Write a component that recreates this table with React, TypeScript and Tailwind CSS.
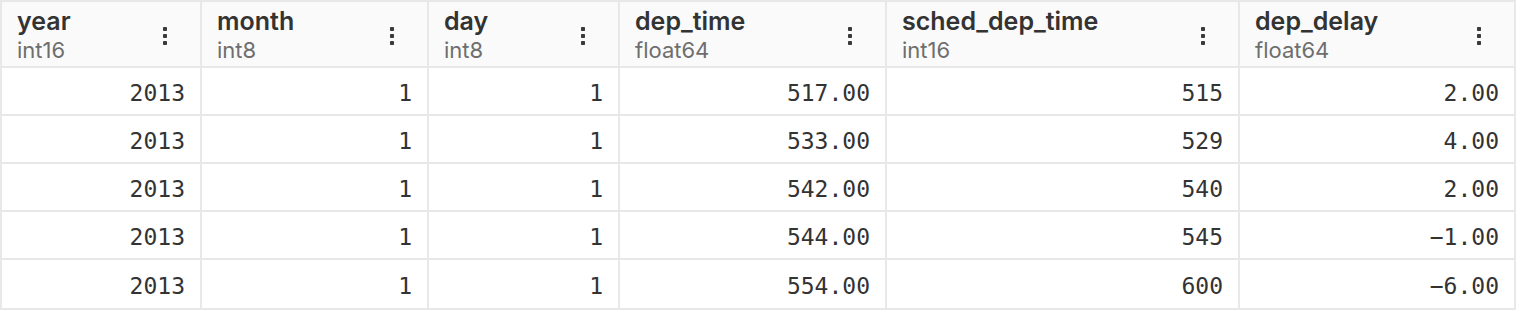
import React from 'react';

const columns = [
  { name: 'year', type: 'int16' },
  { name: 'month', type: 'int8' },
  { name: 'day', type: 'int8' },
  { name: 'dep_time', type: 'float64' },
  { name: 'sched_dep_time', type: 'int16' },
  { name: 'dep_delay', type: 'float64' },
];

const rows = [
  ['2013', '1', '1', '517.00', '515', '2.00'],
  ['2013', '1', '1', '533.00', '529', '4.00'],
  ['2013', '1', '1', '542.00', '540', '2.00'],
  ['2013', '1', '1', '544.00', '545', '\u22121.00'],
  ['2013', '1', '1', '554.00', '600', '\u22126.00'],
];

const Kebab = () => (
  <svg width="6" height="20" viewBox="0 0 6 20" className="shrink-0 mt-[4px]">
    <rect x="1" y="1" width="4" height="4" rx="0.8" fill="#3a3a3a" />
    <rect x="1" y="8" width="4" height="4" rx="0.8" fill="#3a3a3a" />
    <rect x="1" y="15" width="4" height="4" rx="0.8" fill="#3a3a3a" />
  </svg>
);

export default function App() {
  return (
    <div className="w-[1516px] h-[310px] bg-white">
      <div className="grid grid-cols-[200px_227px_191px_267px_353px_274px] border-2 border-[#e8e8e8]">
        {columns.map((col, i) => (
          <div
            key={col.name}
            className={`h-[66px] bg-[#fafafa] border-b-2 border-[#e8e8e8] flex items-center pl-[15px] pr-[32px] ${
              i < columns.length - 1 ? 'border-r-2' : ''
            }`}
          >
            <div className="flex-1 flex flex-col self-start pt-[4px] font-['Inter',sans-serif]">
              <span className="text-[25px] leading-[30px] font-semibold text-[#333333]">{col.name}</span>
              <span className="text-[22px] leading-[29px] text-[#6e6e6e]">{col.type}</span>
            </div>
            <Kebab />
          </div>
        ))}
        {rows.map((row, r) =>
          row.map((val, i) => (
            <div
              key={`${r}-${i}`}
              className={`h-[48px] flex items-center justify-end pt-[5px] pr-[15px] font-['DejaVu_Sans_Mono',monospace] text-[23px] text-[#333333] border-[#e8e8e8] ${
                i < row.length - 1 ? 'border-r-2' : ''
              } ${r < rows.length - 1 ? 'border-b-2' : ''}`}
            >
              {val}
            </div>
          ))
        )}
      </div>
    </div>
  );
}
